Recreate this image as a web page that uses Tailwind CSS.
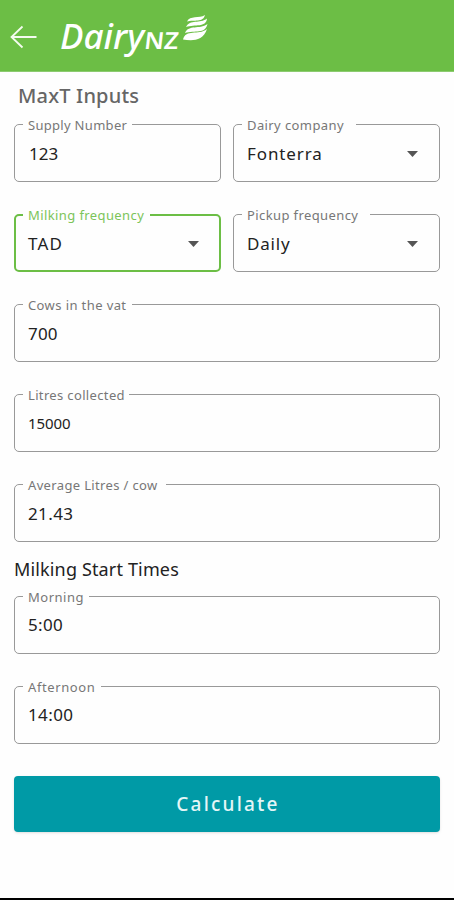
<!DOCTYPE html>
<html lang="en">
<head>
<meta charset="utf-8">
<title>MaxT Inputs</title>
<script src="https://cdn.jsdelivr.net/npm/@tailwindcss/browser@4"></script>
</head>
<body class="bg-white">
<div class="flex h-[900px] w-[454px] flex-col overflow-hidden border-b-2 border-black bg-[#fefefe] font-['Noto_Sans',sans-serif] text-[#222]">
  <header class="flex h-[72px] shrink-0 items-start border-b border-[#8ccb70] bg-[#6cbe45] pl-[10px]">
    <svg class="mt-[25px] h-6 w-[28px] shrink-0" viewBox="0 0 28 24" fill="none" stroke="#f4fbef" stroke-width="1.8"><path d="M26.500 12H1.500M12.500 1.500L1.500 12l11 10.500"/></svg>
    <svg class="ml-[18px] mt-[8px] h-[56px] w-[156px] shrink-0" viewBox="56 8 156 56" fill="#fff" font-family="Noto Sans, sans-serif">
      <text x="60" y="48.500" font-size="33.500" font-style="italic" font-weight="500" textLength="84" lengthAdjust="spacingAndGlyphs">Dairy</text>
      <text transform="translate(143.500 48.500) skewX(-7)" font-size="23.500" font-weight="600" textLength="34" lengthAdjust="spacingAndGlyphs">NZ</text>
      <path d="M187 21.500C190 15 199 19 205 15C203 23 194 19.500 187 21.500Z"/>
      <path d="M186 27C190 19 200 24 207 18.500C206 28 195 24 186 27Z"/>
      <path d="M185 33C189 24 199 30 207.500 24C205 34.500 195 30 185 33Z"/>
      <path d="M183 39.500C186 28.500 198 36 207 29C203 42 191 40.500 183 39.500Z"/>
    </svg>
  </header>
  <main class="flex flex-col px-[14px]">
    <h1 class="mt-[10px] h-[28px] pl-1 text-[20px] leading-[28px] font-medium tracking-[0.2px] text-[#666]">MaxT Inputs</h1>
    <div class="mt-[14px] flex gap-[12px]">
      <div class="relative flex h-[58px] w-[207px] items-center rounded-[5px] border border-[#999] pt-px pl-[14px] text-[17px]"><span class="absolute -top-[9px] left-[8px] w-[109px] bg-[#fefefe] pl-[5px] text-[13px] leading-[18px] tracking-[0.3px] whitespace-nowrap text-[#777]">Supply Number</span>123</div>
      <div class="relative flex h-[58px] w-[207px] items-center rounded-[5px] border border-[#999] pt-px pl-[13px] text-[17px] tracking-[0.9px]"><span class="absolute -top-[9px] left-[8px] w-[114px] bg-[#fefefe] pl-[5px] text-[13px] leading-[18px] tracking-[0.4px] whitespace-nowrap text-[#777]">Dairy company</span>Fonterra<svg class="mr-[21px] ml-auto h-[6px] w-[11px]" viewBox="0 0 12 6" preserveAspectRatio="none" fill="#555"><path d="M0 0h12L6 6z"/></svg></div>
    </div>
    <div class="mt-[32px] flex gap-[12px]">
      <div class="relative flex h-[58px] w-[207px] items-center rounded-[5px] border-2 border-[#6cbe45] pt-px pl-[12px] text-[17px] tracking-[1.2px]"><span class="absolute -top-[10px] left-[7px] w-[127px] bg-[#fefefe] pl-[5px] text-[13px] leading-[18px] tracking-[0.4px] whitespace-nowrap text-[#7cc45a]">Milking frequency</span>TAD<svg class="mr-[20px] ml-auto h-[6px] w-[11px]" viewBox="0 0 12 6" preserveAspectRatio="none" fill="#555"><path d="M0 0h12L6 6z"/></svg></div>
      <div class="relative flex h-[58px] w-[207px] items-center rounded-[5px] border border-[#999] pt-px pl-[13px] text-[17px] tracking-[0.8px]"><span class="absolute -top-[9px] left-[8px] w-[128px] bg-[#fefefe] pl-[5px] text-[13px] leading-[18px] tracking-[0.4px] whitespace-nowrap text-[#777]">Pickup frequency</span>Daily<svg class="mr-[21px] ml-auto h-[6px] w-[11px]" viewBox="0 0 12 6" preserveAspectRatio="none" fill="#555"><path d="M0 0h12L6 6z"/></svg></div>
    </div>
    <div class="relative mt-[32px] flex h-[58px] w-[426px] items-center rounded-[5px] border border-[#999] pt-px pl-[13px] text-[17px] tracking-[0.2px]"><span class="absolute -top-[9px] left-[8px] w-[109px] bg-[#fefefe] pl-[5px] text-[13px] leading-[18px] tracking-[0.4px] whitespace-nowrap text-[#777]">Cows in the vat</span>700</div>
    <div class="relative mt-[32px] flex h-[58px] w-[426px] items-center rounded-[5px] border border-[#999] pl-[13px] text-[15px] tracking-[-0.1px]"><span class="absolute -top-[9px] left-[8px] w-[106px] bg-[#fefefe] pl-[5px] text-[13px] leading-[18px] tracking-[0.35px] whitespace-nowrap text-[#777]">Litres collected</span>15000</div>
    <div class="relative mt-[32px] flex h-[58px] w-[426px] items-center rounded-[5px] border border-[#999] pt-px pl-[13px] text-[17px] tracking-[0.4px]"><span class="absolute -top-[9px] left-[8px] w-[143px] bg-[#fefefe] pl-[5px] text-[13px] leading-[18px] tracking-[0.35px] whitespace-nowrap text-[#777]">Average Litres / cow</span>21.43</div>
    <h2 class="mt-[15px] h-[24px] text-[18px] leading-[24px] tracking-[0.15px]">Milking Start Times</h2>
    <div class="relative mt-[15px] flex h-[58px] w-[426px] items-center rounded-[5px] border border-[#999] pl-[13px] text-[17px] tracking-[0.3px]"><span class="absolute -top-[9px] left-[8px] w-[66px] bg-[#fefefe] pl-[5px] text-[13px] leading-[18px] tracking-[0.5px] whitespace-nowrap text-[#777]">Morning</span>5:00</div>
    <div class="relative mt-[32px] flex h-[58px] w-[426px] items-center rounded-[5px] border border-[#999] pl-[13px] text-[17px] tracking-[0.4px]"><span class="absolute -top-[9px] left-[8px] w-[78px] bg-[#fefefe] pl-[5px] text-[13px] leading-[18px] tracking-[0.6px] whitespace-nowrap text-[#777]">Afternoon</span>14:00</div>
    <button class="mt-[32px] h-[56px] w-[426px] rounded-[4px] bg-[#009aa6] pl-[2px] text-[19px] font-medium tracking-[2.2px] text-[#e4f6f7] shadow-sm">Calculate</button>
  </main>
</div>
</body>
</html>
